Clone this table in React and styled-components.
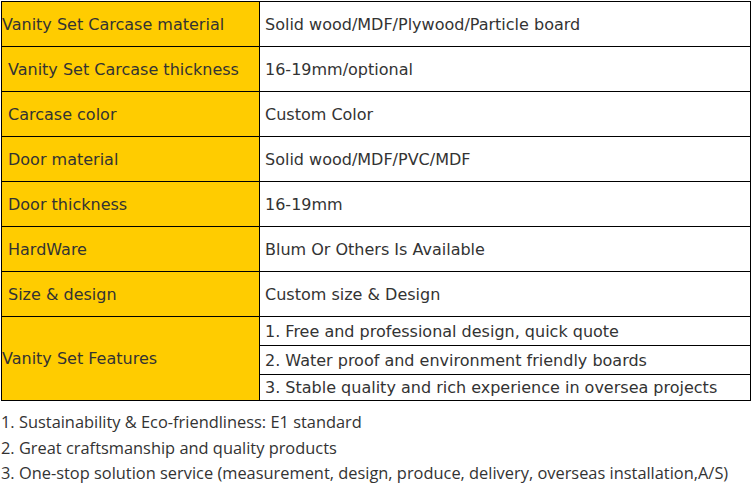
import React from "react";
import styled, { createGlobalStyle } from "styled-components";

const GlobalStyle = createGlobalStyle`
  html, body {
    margin: 0;
    padding: 0;
    background: #fff;
  }
`;

const Page = styled.div`
  padding: 1px 0 0 1px;
  width: 751px;
`;

const SpecTable = styled.table`
  border-collapse: collapse;
  width: 750px;
  font-family: "DejaVu Sans", Verdana, sans-serif;
  font-size: 16px;
  color: #333;
  table-layout: fixed;
`;

const LabelCell = styled.td`
  width: 257px;
  background: #ffcc00;
  border: 1px solid #000;
  padding: 0 0 0 ${(p) => (p.$indent ? "6px" : "0")};
  height: 44px;
  white-space: nowrap;
  vertical-align: middle;
`;

const ValueCell = styled.td`
  border: 1px solid #000;
  padding: 0 0 0 5px;
  height: ${(p) => (p.$sub ? `${p.$sub}px` : "44px")};
  white-space: nowrap;
  vertical-align: middle;
`;

const Notes = styled.div`
  margin-top: 8px;
  font-family: "Open Sans", "Noto Sans", sans-serif;
  font-size: 16.4px;
  line-height: 25.5px;
  color: #333;
`;

const Note = styled.div`
  white-space: nowrap;
`;

const rows = [
  ["Vanity Set Carcase material", "Solid wood/MDF/Plywood/Particle board", false],
  ["Vanity Set Carcase thickness", "16-19mm/optional", true],
  ["Carcase color", "Custom Color", true],
  ["Door material", "Solid wood/MDF/PVC/MDF", true],
  ["Door thickness", "16-19mm", true],
  ["HardWare", "Blum Or Others Is Available", true],
  ["Size & design", "Custom size & Design", true],
];

const features = [
  ["1. Free and professional design, quick quote", 28],
  ["2. Water proof and environment friendly boards", 28],
  ["3. Stable quality and rich experience in oversea projects", 25],
];

const notes = [
  "1. Sustainability & Eco-friendliness: E1 standard",
  "2. Great craftsmanship and quality products",
  "3. One-stop solution service (measurement, design, produce, delivery, overseas installation,A/S)",
];

export default function App() {
  return (
    <Page>
      <GlobalStyle />
      <SpecTable>
        <tbody>
          {rows.map(([label, value, indent]) => (
            <tr key={label}>
              <LabelCell $indent={indent}>{label}</LabelCell>
              <ValueCell>{value}</ValueCell>
            </tr>
          ))}
          {features.map(([text, h], i) => (
            <tr key={text}>
              {i === 0 && <LabelCell rowSpan={3}>Vanity Set Features</LabelCell>}
              <ValueCell $sub={h}>{text}</ValueCell>
            </tr>
          ))}
        </tbody>
      </SpecTable>
      <Notes>
        {notes.map((n) => (
          <Note key={n}>{n}</Note>
        ))}
      </Notes>
    </Page>
  );
}
